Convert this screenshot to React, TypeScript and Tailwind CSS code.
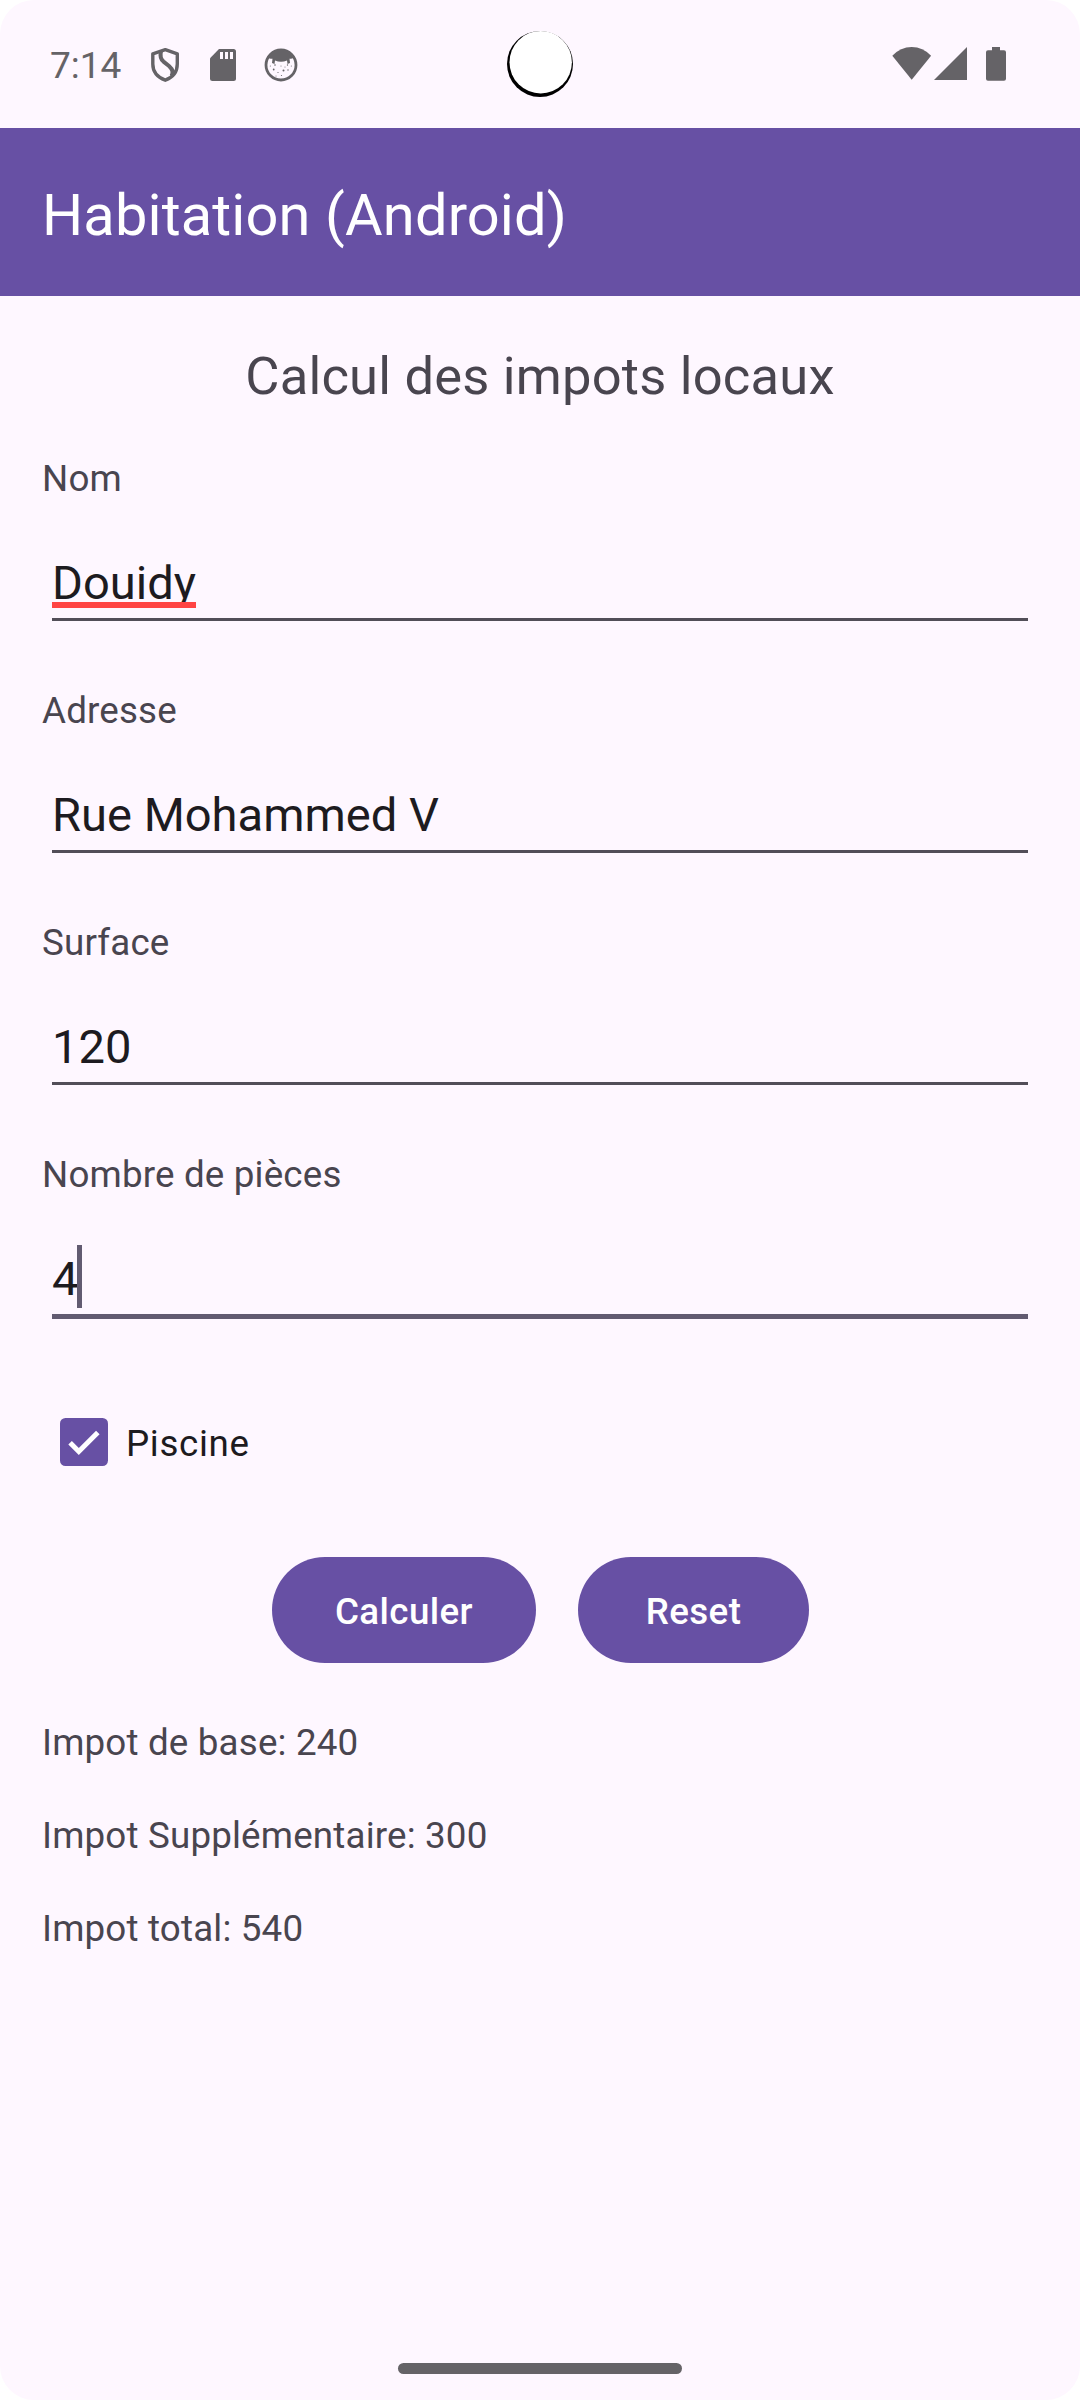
function ShieldIcon() {
  return (
    <svg className="h-[36px] w-[32px]" viewBox="0 0 32 36" fill="none" stroke="#656367" strokeWidth="3.4" strokeLinejoin="round" strokeLinecap="round">
      <path d="M16.3 2.7 L28.3 6.8 V17 C28.3 25 23.5 30.5 16.3 33.2 C9 30.5 3.8 25 3.8 17 V6.8 Z" />
      <path strokeWidth="4" strokeLinecap="butt" d="M12 4.4 C11 8.5 11.5 12 14.5 14.6 L20 19 C24 22.5 24.3 26 22.5 29" />
    </svg>
  );
}

function SdCardIcon() {
  return (
    <svg className="h-[32px] w-[26px]" viewBox="0 0 26 32">
      <path fill="#656367" d="M9 0 H23.5 Q26 0 26 2.5 V29.5 Q26 32 23.5 32 H2.5 Q0 32 0 29.5 V9.3 Z" />
      <path fill="#fef7ff" d="M10 3 h3 v7 h-3z M15 3 h3 v7 h-3z M20 3 h3 v7 h-3z" />
    </svg>
  );
}

function FaceIcon() {
  return (
    <svg className="h-[34px] w-[34px]" viewBox="0 0 34 34">
      <circle cx="17" cy="17" r="15" fill="none" stroke="#656367" strokeWidth="2.8" />
      <path fill="#656367" d="M3.5 9.5 C6 4 11 1.5 17 1.5 S28 4 30.5 9.5 C28.5 10.6 26.5 11 25.5 10.8 L26 15 L23.5 16 L23 12.5 C19 14.2 15 14.2 11 12.5 L10.5 16 L8 15 L8.5 10.8 C7 11 5 10.6 3.5 9.5 Z" />
      <g fill="#656367">
        <circle cx="11" cy="17" r="0.8" />
        <circle cx="19.5" cy="22.5" r="1" />
        <circle cx="23.5" cy="17" r="0.7" />
        <circle cx="9.7" cy="21.5" r="0.9" />
        <circle cx="14" cy="24.5" r="0.6" />
        <circle cx="24" cy="22" r="0.7" />
        <circle cx="17" cy="18" r="0.5" />
        <circle cx="17.5" cy="27.5" r="0.6" />
        <circle cx="21" cy="19" r="0.5" />
        <circle cx="6.3" cy="18" r="0.5" />
        <circle cx="12" cy="28" r="0.5" />
        <circle cx="27.3" cy="18" r="0.5" />
      </g>
    </svg>
  );
}

function StatusBar() {
  return (
    <div className="relative flex h-[128px] items-start justify-between pl-[50px] pr-[74px]">
      <div className="flex items-start">
        <span className="mt-[42px] w-[99px] text-[37px] leading-[48px] text-[#656367]">7:14</span>
        <div className="mt-[47px] flex">
          <ShieldIcon />
        </div>
        <div className="ml-[29px] mt-[49px]">
          <SdCardIcon />
        </div>
        <div className="ml-[28px] mt-[48px]">
          <FaceIcon />
        </div>
      </div>
      <svg className="absolute left-[506px] top-[30px] h-[68px] w-[68px]" viewBox="0 0 68 68">
        <circle cx="34" cy="34" r="33" fill="#000" />
        <circle cx="34.7" cy="32.2" r="31.2" fill="#fff" />
      </svg>
      <div className="mt-[47px] flex">
        <svg className="h-[34px] w-[40px]" viewBox="0 0 40 34" fill="#656367">
          <path d="M0.3 8.8 Q8.5 0 19.7 0 T39.1 8.8 L19.7 32.7 Z" />
        </svg>
        <svg className="ml-[2px] h-[34px] w-[34px]" viewBox="0 0 34 34" fill="#656367">
          <path d="M33 0 V33 H0 Z" />
        </svg>
        <svg className="ml-[18px] h-[34px] w-[20px]" viewBox="0 0 20 34" fill="#656367">
          <path d="M6 0 h8 v3.3 h4 q2 0 2 2 V31.8 q0 2 -2 2 H2 q-2 0 -2 -2 V5.3 q0 -2 2 -2 h4z" />
        </svg>
      </div>
    </div>
  );
}

type FieldProps = { label: string; value: string; misspelled?: boolean; focused?: boolean };

function Field({ label, value, misspelled, focused }: FieldProps) {
  return (
    <div className="h-[232px] px-[42px]">
      <div className="h-[49px] text-[36.75px] leading-[49px] tracking-[0.17px] text-[#49454f]">{label}</div>
      <div className="mx-[10px] mt-[49px] flex h-[62px] text-[47.1px] leading-[62px] text-[#1d1b20]">
        <span className="relative">
          {value}
          {misspelled && <span className="absolute left-0 right-0 top-[50px] h-[6px] bg-[#ff4444]" />}
          {focused && <span className="absolute -right-[4px] -top-[3px] h-[63px] w-[5px] bg-[#625b71]" />}
        </span>
      </div>
      <div className={focused ? "mx-[10px] mt-[4px] h-[5px] bg-[#625b71]" : "mx-[10px] mt-[4px] h-[3px] bg-[#524e58]"} />
    </div>
  );
}

export default function App() {
  return (
    <div className="h-[2400px] w-[1080px] bg-white font-['Roboto',sans-serif]">
      <div className="flex h-full flex-col overflow-hidden rounded-[34px] bg-[#fef7ff]">
        <StatusBar />
        <header className="h-[168px] bg-[#6750a4] pl-[42px] pt-[7px] text-[57.75px] leading-[161px] tracking-[0.15px] text-white">
          Habitation (Android)
        </header>
        <h1 className="mt-[45px] h-[113px] text-center text-[52.5px] leading-[70px] tracking-[0.2px] text-[#49454f]">
          Calcul des impots locaux
        </h1>
        <Field label="Nom" value="Douidy" misspelled />
        <Field label="Adresse" value="Rue Mohammed V" />
        <Field label="Surface" value="120" />
        <Field label="Nombre de pièces" value="4" focused />
        <div className="flex h-[120px] items-center pl-[60px]">
          <svg className="h-[48px] w-[48px]" viewBox="0 0 48 48">
            <rect width="48" height="48" rx="5.5" fill="#6750a4" />
            <path d="M10.1 24.7 L18.8 33.4 L37.8 14.4" fill="none" stroke="#fff" strokeWidth="5" />
          </svg>
          <span className="ml-[18px] mt-[3px] text-[36.75px] leading-[48px] tracking-[0.0178em] text-[#1d1b20]">Piscine</span>
        </div>
        <div className="mt-[55px] flex justify-center gap-[42px] text-[36.75px] font-medium leading-[109px] tracking-[0.4px] text-white">
          <button className="h-[106px] w-[264px] rounded-full bg-[#6750a4] pl-[1px]">Calculer</button>
          <button className="h-[106px] w-[231px] rounded-full bg-[#6750a4] pl-[1px]">Reset</button>
        </div>
        <div className="mt-[33px] flex flex-col pl-[42px] text-[36.75px] leading-[93px] tracking-[0.17px] text-[#49454f]">
          <p>Impot de base: 240</p>
          <p>Impot Supplémentaire: 300</p>
          <p>Impot total: 540</p>
        </div>
        <div className="mx-auto mb-[26px] mt-auto h-[11px] w-[284px] rounded-full bg-[#656367]" />
      </div>
    </div>
  );
}
